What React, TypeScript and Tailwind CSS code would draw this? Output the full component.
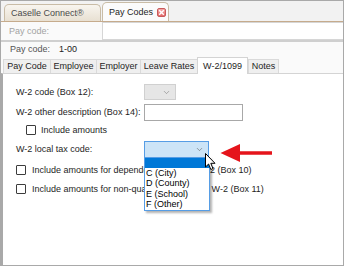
import { ChevronDown } from 'lucide-react';

const tabs = [
  { label: 'Pay Code', w: 'w-[47px]' },
  { label: 'Employee', w: 'w-[46px]' },
  { label: 'Employer', w: 'w-[44px]' },
  { label: 'Leave Rates', w: 'w-[57px]' },
  { label: 'W-2/1099', w: 'w-[51px]', active: true },
  { label: 'Notes', w: 'w-[31px]' },
];

const options = ['C (City)', 'D (County)', 'E (School)', 'F (Other)'];

function Checkbox() {
  return <span className="w-[10px] h-[10px] shrink-0 border border-[#3c3c3c] bg-white rounded-[1px]" />;
}

export default function App() {
  return (
    <div className="w-[344px] h-[266px] flex flex-col overflow-hidden border border-[#a9a9a9] bg-[#f7f7f7] text-[9px] leading-none text-[#1e1e1e] font-['Liberation_Sans',Arial,sans-serif]">
      {/* Document tabs */}
      <div className="h-[21px] shrink-0 flex items-end gap-[1px] pl-[3px] bg-[#f2f2f2] border-b border-[#c6ab8c]">
        <div className="h-[17px] w-[97px] flex items-center pl-[6px] rounded-t-[5px] border border-b-0 border-[#c9bca6] bg-gradient-to-b from-[#f8f5ef] to-[#e8e0d2] text-[#4a4a4a]">
          Caselle Connect®
        </div>
        <div className="h-[19px] w-[67px] flex items-center justify-between pl-[6px] pr-[2px] rounded-t-[5px] border border-b-0 border-[#c9bca6] bg-[#fbfbfb] text-[#1e1e1e]">
          Pay Codes
          <span className="w-[9px] h-[9px] flex items-center justify-center rounded-[2px] border border-[#c85a5a] bg-gradient-to-b from-[#f4a6a6] to-[#e26b6b]">
            <svg width="7" height="7" viewBox="0 0 7 7">
              <path d="M1.2 1.2 L5.8 5.8 M5.8 1.2 L1.2 5.8" stroke="white" strokeWidth="1.4" />
            </svg>
          </span>
        </div>
      </div>

      {/* Pay code lookup */}
      <div className="h-[20px] shrink-0 flex items-center bg-[#fafafa] border-b-2 border-[#cfcfcf]">
        <span className="w-[101px] pl-[8px] text-[#a3a3a3]">Pay code:</span>
        <div className="flex-1 h-[18px] bg-white border border-[#d6d6d6] border-r-0" />
      </div>

      {/* Current pay code */}
      <div className="h-[15px] shrink-0 flex items-center bg-[#fafafa]">
        <span className="w-[58px] pl-[9px] text-[#555]">Pay code:</span>
        <span className="text-[#222]">1-00</span>
      </div>

      {/* Section tabs */}
      <div className="h-[16px] shrink-0 flex items-end pl-[2px] bg-[#fafafa]">
        {tabs.map((t) =>
          t.active ? (
            <div
              key={t.label}
              className={`${t.w} h-[17px] -mb-[1px] relative z-10 flex items-center justify-center bg-white border border-b-0 border-[#d4d4d4]`}
            >
              {t.label}
            </div>
          ) : (
            <div
              key={t.label}
              className={`${t.w} h-[14px] flex items-center justify-center bg-[#efefef] border border-r-0 last:border-r border-b-0 border-[#dadada]`}
            >
              {t.label}
            </div>
          ),
        )}
      </div>

      {/* W-2 panel */}
      <div className="flex-1 relative bg-white border-t border-l-2 border-[#d4d4d4] border-l-[#a9a9a9] pl-[13px] pt-[10px] flex flex-col">
        <div className="flex items-center h-[16px]">
          <span className="w-[128px]">W-2 code (Box 12):</span>
          <div className="w-[32px] h-[16px] flex items-center justify-end pr-[4px] bg-[#e6e6e6] border border-[#d0d0d0]">
            <ChevronDown size={9} strokeWidth={1.5} className="text-[#7a7a7a]" />
          </div>
        </div>

        <div className="flex items-center h-[17px] mt-[4px]">
          <span className="w-[128px]">W-2 other description (Box 14):</span>
          <div className="w-[99px] h-[17px] bg-white border border-[#a8a8a8]" />
        </div>

        <div className="flex items-center gap-[5px] h-[10px] mt-[4px] pl-[10px]">
          <Checkbox />
          <span>Include amounts</span>
        </div>

        <div className="flex items-center h-[17px] mt-[6px] relative z-20">
          <span className="w-[128px]">W-2 local tax code:</span>
          <div className="relative w-[65px]">
            <div className="w-[65px] h-[17px] flex items-center justify-end pr-[4px] bg-[#cce4f7] border border-[#569de5]">
              <ChevronDown size={9} strokeWidth={1.5} className="text-[#5a5a5a]" />
            </div>
            <div className="absolute left-0 top-[16px] w-[66px] overflow-hidden bg-white border border-[#569de5] shadow-[2px_2px_2px_rgba(0,0,0,0.3)]">
              <div className="h-[10px] bg-[#0078d7]" />
              {options.map((o) => (
                <div key={o} className="h-[10.5px] flex items-center pl-[1px] text-black whitespace-nowrap">
                  {o}
                </div>
              ))}
            </div>
          </div>
        </div>

        <div className="flex items-center gap-[6px] h-[10px] mt-[7px]">
          <Checkbox />
          <span className="whitespace-nowrap">Include amounts for dependent care on a W-2 (Box 10)</span>
        </div>

        <div className="flex items-center gap-[6px] h-[10px] mt-[9px]">
          <Checkbox />
          <span className="whitespace-nowrap">Include amounts for non-qualified plans on a W-2 (Box 11)</span>
        </div>

        {/* Mouse pointer */}
        <svg className="absolute left-[202px] top-[79px] z-30" width="12" height="18" viewBox="0 0 12 18">
          <path
            d="M0.5 0.5 L0.5 14 L3.6 11 L5.8 16.5 L8 15.6 L5.8 10.3 L10 10.3 Z"
            fill="white"
            stroke="black"
            strokeWidth="1"
            strokeLinejoin="round"
          />
        </svg>

        {/* Red callout arrow */}
        <svg className="absolute left-[217px] top-[69px] z-30" width="53" height="20" viewBox="0 0 53 20">
          <path d="M52 8.2 L20 8.2 L20 1 L0.5 10 L20 19 L20 11.8 L52 11.8 Z" fill="#e5141b" />
        </svg>
      </div>
    </div>
  );
}
